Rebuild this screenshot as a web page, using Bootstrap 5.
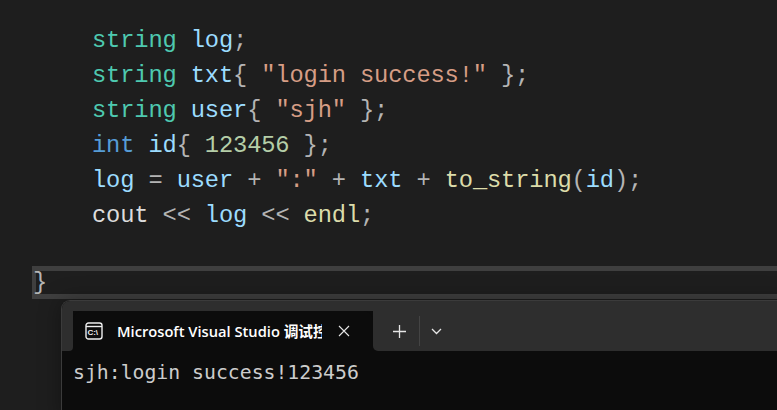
<!DOCTYPE html>
<html lang="zh">
<head>
<meta charset="utf-8">
<link href="https://cdn.jsdelivr.net/npm/bootstrap@5.3.0/dist/css/bootstrap.min.css" rel="stylesheet">
<style>
html,body{height:410px;overflow:hidden;background:#1e1e1e}
.ed-wrap{height:410px;background:#1e1e1e;position:relative;overflow:hidden}
.code-lines{padding:23px 0 0 92px;font-family:"Liberation Mono",monospace;font-size:23.75px;line-height:35px;height:266px;letter-spacing:-.15px}
.code-row{height:35px;white-space:pre}
.t{color:#4ec9b0}.v{color:#9cdcfe}.p{color:#b4b4b4}.s{color:#d69d85}.k{color:#569cd6}.n{color:#b5cea8}.f{color:#dcdcaa}.c{color:#dcdcdc}
.cur-line{height:33px;margin-left:32px;border:solid #3f3f3f;border-width:5px 0 5px 4px;background:#1e1e1e;font-family:"Liberation Mono",monospace;font-size:23.75px;line-height:23px;color:#b4b4b4}
.cur-line span{display:block;margin-left:-3px}
.term{position:absolute;left:61px;top:300px;right:-10px;bottom:-10px;background:#0c0c0c;border:solid #3b3b3b;border-width:1px 0 0 1px;border-top-left-radius:9px;box-shadow:0 0 22px rgba(0,0,0,.35)}
.tab-strip{height:10px;background:#2e2e2e;border-top-left-radius:8px}
.tab-row{height:40px}
.tab-left{width:11px;background:#2e2e2e;border-bottom-right-radius:4px;flex:none}
.tab-on{width:300px;flex:none;background:#0c0c0c;border-radius:9px 9px 0 0;padding-left:12px;color:#fff;font-family:"Open Sans","Noto Sans CJK SC",sans-serif;font-size:14.7px;font-weight:600}
.tab-title{width:205px;overflow:hidden;white-space:nowrap;margin-left:14px}
.tab-tools{background:#2e2e2e;border-bottom-left-radius:5px}
.sep{width:1px;height:30px;background:#444;margin-left:13px}
.out{font-family:"DejaVu Sans Mono",monospace;font-size:19.8px;color:#cccccc;padding:10px 0 0 11px;line-height:23.5px;white-space:pre}
.ico{display:block;flex:none}
.tool-plus{margin-left:20px}
.tool-chev{margin-left:11px}
</style>
</head>
<body>
<div class="ed-wrap">
<div class="code-lines">
<div class="code-row"><span class="t">string</span> <span class="v">log</span><span class="p">;</span></div>
<div class="code-row"><span class="t">string</span> <span class="v">txt</span><span class="p">{ </span><span class="s">″login success!″</span><span class="p"> };</span></div>
<div class="code-row"><span class="t">string</span> <span class="v">user</span><span class="p">{ </span><span class="s">″sjh″</span><span class="p"> };</span></div>
<div class="code-row"><span class="k">int</span> <span class="v">id</span><span class="p">{ </span><span class="n">123456</span><span class="p"> };</span></div>
<div class="code-row"><span class="v">log</span> <span class="p">=</span> <span class="v">user</span> <span class="p">+</span> <span class="s">″:″</span> <span class="p">+</span> <span class="v">txt</span> <span class="p">+</span> <span class="f">to_string</span><span class="p">(</span><span class="v">id</span><span class="p">);</span></div>
<div class="code-row"><span class="c">cout</span> <span class="p">&lt;&lt;</span> <span class="v">log</span> <span class="p">&lt;&lt;</span> <span class="f">endl</span><span class="p">;</span></div>
</div>
<div class="cur-line"><span>}</span></div>
<div class="term">
<div class="tab-strip"></div>
<div class="tab-row d-flex">
<div class="tab-left"></div>
<div class="tab-on d-flex align-items-center">
<svg class="ico" width="18" height="18" viewBox="0 0 18 18" fill="none" stroke="#eee" stroke-width="1.4"><rect x="1" y="1" width="16" height="16" rx="2.5"/><path d="M1 4.500H17"/><text x="2.4" y="13" font-family="Liberation Sans" font-size="8" font-weight="700" fill="#eee" stroke="none">C:\</text></svg>
<div class="tab-title">Microsoft Visual Studio 调试控制台</div>
<svg class="ico ms-3" width="12" height="12" viewBox="0 0 12 12" stroke="#e6e6e6" stroke-width="1.1"><path d="M1 1L11 11M11 1L1 11"/></svg>
</div>
<div class="tab-tools flex-grow-1 d-flex align-items-center">
<svg class="ico tool-plus" width="13" height="13" viewBox="0 0 13 13" stroke="#e6e6e6" stroke-width="1.3"><path d="M6.500 0V13M0 6.500H13"/></svg>
<div class="sep"></div>
<svg class="ico tool-chev" width="11" height="7" viewBox="0 0 11 7" fill="none" stroke="#e6e6e6" stroke-width="1.3"><path d="M1 1L5.500 5.500L10 1"/></svg>
</div>
</div>
<div class="out">sjh:login success!123456

D:\project\vs\project1\x64\Debug\project1.exe</div>
</div>
</div>
<script src="https://cdn.jsdelivr.net/npm/bootstrap@5.3.0/dist/js/bootstrap.bundle.min.js"></script>
</body>
</html>
